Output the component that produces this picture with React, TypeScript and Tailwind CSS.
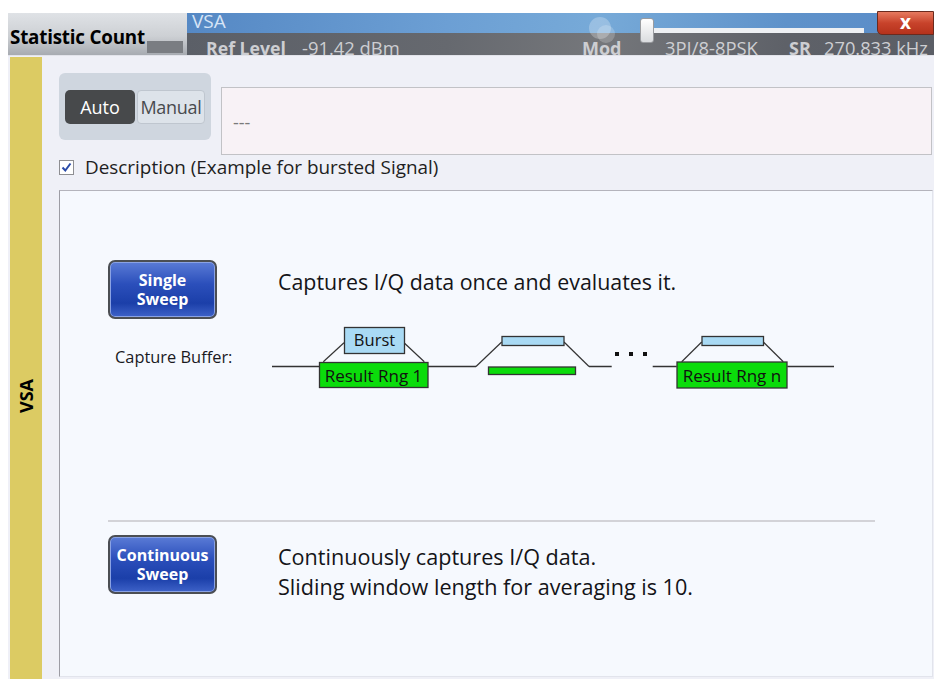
import React from "react";

function SweepButton({ top, bottom }: { top: string; bottom: string }) {
  return (
    <div className="flex h-[59px] w-[109px] shrink-0 flex-col items-center justify-center rounded-[7px] border-2 border-[#4b4e53] bg-[linear-gradient(to_bottom,#5a7bd6_0%,#2b4fbb_40%,#1b3fa9_75%,#3e62c8_100%)] text-[16px] font-bold leading-[19px] text-white shadow-[inset_0_0_0_1px_#8aa2e4]">
      <span className="leading-[19px]">{top}</span>
      <span className="leading-[19px]">{bottom}</span>
    </div>
  );
}

function CaptureDiagram() {
  const s = "#333";
  return (
    <svg width="566" height="66" viewBox="0 0 566 66" className="shrink-0">
      {/* first burst */}
      <line x1="2" y1="41.5" x2="49" y2="41.5" stroke={s} strokeWidth="1.5" />
      <line x1="53.3" y1="36.7" x2="74" y2="17.7" stroke={s} strokeWidth="1.2" />
      <line x1="134" y1="17.7" x2="154.3" y2="36.7" stroke={s} strokeWidth="1.2" />
      <rect x="74.5" y="2.5" width="60" height="26" fill="#a9daf4" stroke={s} strokeWidth="1.3" />
      <text x="104.5" y="21" textAnchor="middle" fontSize="16.5" fill="#111">Burst</text>
      <rect x="49.5" y="37.5" width="108.5" height="25" fill="#0bdc0b" stroke={s} strokeWidth="1.3" />
      <text x="103.5" y="56.5" textAnchor="middle" fontSize="17" fill="#111">Result Rng 1</text>
      <line x1="158" y1="41.5" x2="206" y2="41.5" stroke={s} strokeWidth="1.5" />

      {/* second burst */}
      <line x1="206" y1="41.5" x2="231.7" y2="17" stroke={s} strokeWidth="1.2" />
      <line x1="294" y1="17" x2="319" y2="41.5" stroke={s} strokeWidth="1.2" />
      <rect x="232" y="11.5" width="62" height="9" fill="#a9daf4" stroke={s} strokeWidth="1.3" />
      <rect x="218.5" y="42" width="87" height="7.5" fill="#0bdc0b" stroke={s} strokeWidth="1.3" />
      <line x1="319" y1="41.5" x2="341.7" y2="41.5" stroke={s} strokeWidth="1.5" />

      {/* dots */}
      <rect x="345" y="27" width="4" height="4" fill="#111" />
      <rect x="359" y="27" width="4" height="4" fill="#111" />
      <rect x="373" y="27" width="4" height="4" fill="#111" />

      {/* last burst */}
      <line x1="382.7" y1="41.5" x2="406.7" y2="41.5" stroke={s} strokeWidth="1.5" />
      <line x1="411.7" y1="36.7" x2="431.7" y2="17" stroke={s} strokeWidth="1.2" />
      <line x1="493.3" y1="17" x2="513.3" y2="36.7" stroke={s} strokeWidth="1.2" />
      <rect x="432" y="11.5" width="61.5" height="9" fill="#a9daf4" stroke={s} strokeWidth="1.3" />
      <rect x="407" y="37" width="110" height="26" fill="#0bdc0b" stroke={s} strokeWidth="1.3" />
      <text x="462" y="56.5" textAnchor="middle" fontSize="17" fill="#111">Result Rng n</text>
      <line x1="517.3" y1="41.5" x2="564" y2="41.5" stroke={s} strokeWidth="1.5" />
    </svg>
  );
}

export default function App() {
  return (
    <div className="relative flex h-[679px] w-[934px] flex-col overflow-hidden bg-white font-['Open_Sans','Noto_Sans',sans-serif] text-[#1a1a1a]">
      <div className="h-[13px] shrink-0" />

      {/* Title / status bar */}
      <div className="flex h-[42px] shrink-0">
        <div className="relative ml-[8px] w-[179px] bg-[linear-gradient(to_bottom,#dfe2e6,#cdd0d4_55%,#a7abb1)] pl-[2px] pt-[13px]">
          <div className="absolute bottom-[2px] right-[4px] h-[12px] w-[36px] bg-[#7a7d82]" />
          <span className="relative text-[18.8px] font-bold leading-[22px] tracking-[-0.2px] text-black">
            Statistic Count
          </span>
        </div>
        <div className="relative flex flex-1 flex-col">
          <div className="h-[20px] overflow-hidden bg-[linear-gradient(100deg,#5588c4_0%,#6c9fd4_35%,#77aad8_55%,#5f92ca_80%,#5a8cc8_100%)] pl-[5px] text-[19px] leading-[17px] text-[#d6e4f6]">
            VSA
          </div>
          <div className="flex h-[22px] items-start overflow-hidden bg-[linear-gradient(100deg,#5b5f67_0%,#66696f_35%,#75777b_55%,#5e6168_80%,#5b5e66_100%)] pl-[19px] pt-[4px] text-[18px] leading-[22px] text-[#cdced2]">
            <span className="w-[96px] text-[17.7px] font-bold">Ref Level</span>
            <span className="w-[280px] text-[18.4px]">-91.42 dBm</span>
            <span className="w-[83px] font-bold">Mod</span>
            <span className="w-[124px] text-[18.4px]">3PI/8-8PSK</span>
            <span className="w-[35px] font-bold">SR</span>
            <span className="text-[18.3px]">270.833 kHz</span>
          </div>
          {/* bubbles over "Mod" */}
          <div className="absolute left-[402px] top-[4px] h-[22px] w-[22px] rounded-full bg-white/25" />
          <div className="absolute left-[410px] top-[12px] h-[18px] w-[18px] rounded-full bg-white/20" />
          {/* slider */}
          <div className="absolute left-[466px] top-[15px] h-[5px] w-[211px] bg-[#eef0f3]" />
          <div className="absolute left-[453px] top-[5px] h-[25px] w-[14px] rounded-[3px] border border-[#9a9ca0] bg-[linear-gradient(to_bottom,#ffffff,#dadcdf)]" />
        </div>
      </div>

      {/* close button */}
      <div className="absolute right-0 top-[11px] flex h-[24px] w-[57px] items-center justify-center rounded-bl-[5px] border border-[#6b2a1e] bg-[linear-gradient(to_bottom,#e77a5f,#c8432b_50%,#b5321c)] pb-[2px] text-[19px] font-bold leading-none text-white">
        x
      </div>

      {/* Main area */}
      <div className="ml-[8px] flex flex-1 border-t border-[#e2e3ea] bg-[#eff0f7]">
        <div className="ml-[2px] mt-[1px] flex w-[32px] items-start justify-center bg-[#dccb63] pt-[322px]">
          <span className="rotate-180 text-[18px] font-bold leading-[20px] text-black [writing-mode:vertical-rl]">
            VSA
          </span>
        </div>

        <div className="flex flex-1 flex-col">
          <div className="flex items-start">
            <div className="ml-[17px] mt-[17px] flex h-[67px] w-[152px] items-start gap-[2px] rounded-[6px] bg-[#cfd6df] pl-[6px] pt-[17px]">
              <div className="flex h-[34px] w-[70px] items-center justify-center rounded-[5px] bg-[#47494b] text-[18px] text-white">
                Auto
              </div>
              <div className="flex h-[34px] w-[68px] items-center justify-center rounded-[4px] border border-[#bfc6cf] bg-[#dde3ea] text-[18px] tracking-[-0.3px] text-[#484a4e]">
                Manual
              </div>
            </div>
            <div className="ml-[10px] mt-[31px] h-[68px] w-[711px] border border-[#c2c2c6] bg-[#f8f2f6] pl-[11px] pt-[21px] text-[18px] text-[#7a7a7a]">
              ---
            </div>
          </div>

          <div className="ml-[17px] mt-[4px] flex h-[16px] items-center">
            <div className="flex h-[15px] w-[15px] items-center justify-center border border-[#8e8e92] bg-white">
              <svg width="11" height="11" viewBox="0 0 11 11">
                <path d="M1.5 5.5 L4.3 8.5 L9.5 1.5" fill="none" stroke="#2a4aa8" strokeWidth="2" />
              </svg>
            </div>
            <span className="ml-[11px] text-[18.9px] leading-[20px] text-[#1e1e22]">
              Description (Example for bursted Signal)
            </span>
          </div>

          <div className="mb-[2px] ml-[17px] mr-[1px] mt-[15px] flex flex-1 flex-col border-b border-l border-r border-t border-b-[#e2e4ec] border-l-[#9c9ca4] border-r-[#e2e4ec] border-t-[#b4b4bc] bg-[#f6f9fe] pl-[48px] pt-[69px]">
            <div className="flex items-start">
              <SweepButton top="Single" bottom="Sweep" />
              <p className="ml-[61px] mt-[9px] text-[21.4px] leading-[26px] text-[#141418]">
                Captures I/Q data once and evaluates it.
              </p>
            </div>

            <div className="mt-[6px] flex items-start pl-[7px]">
              <span className="mt-[23px] w-[155px] shrink-0 text-[16.4px] leading-[18px] text-[#1a1a1e]">
                Capture Buffer:
              </span>
              <CaptureDiagram />
            </div>

            <div className="mt-[129px] h-[2px] w-[767px] bg-[#d3d3d8]" />

            <div className="mt-[13px] flex items-start">
              <SweepButton top="Continuous" bottom="Sweep" />
              <div className="ml-[61px] mt-[7px] text-[21.6px] leading-[30px] text-[#141418]">
                <p>Continuously captures I/Q data.</p>
                <p>Sliding window length for averaging is 10.</p>
              </div>
            </div>
          </div>
        </div>
      </div>
    </div>
  );
}
